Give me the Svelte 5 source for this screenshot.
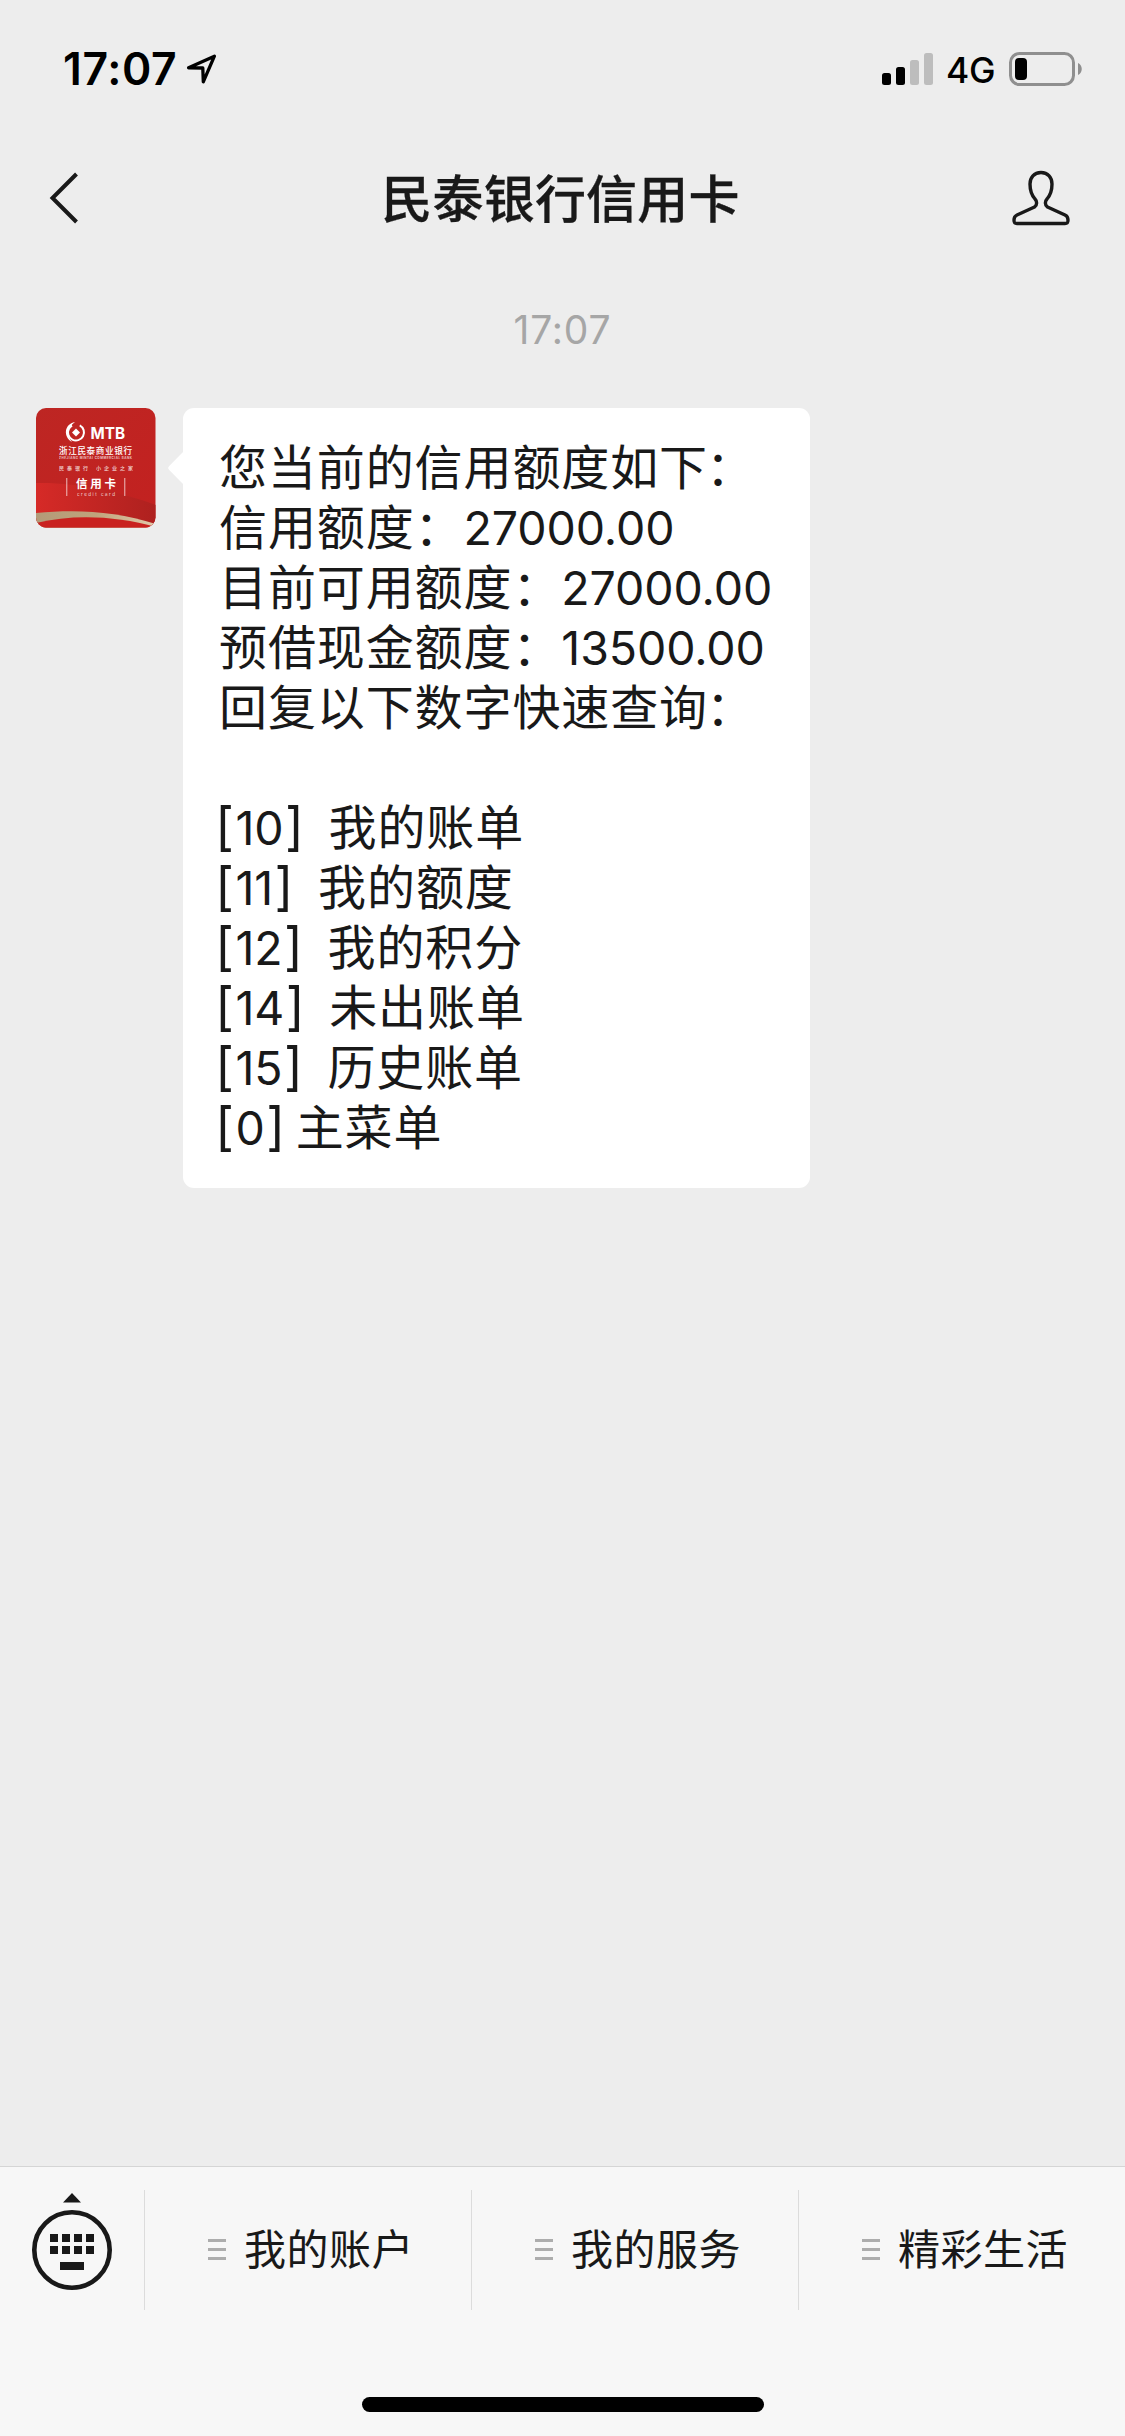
<script lang="ts">
  const title = '民泰银行信用卡';
  const time = '17:07';

  const limits = [
    { label: '信用额度：', value: '27000.00' },
    { label: '目前可用额度：', value: '27000.00' },
    { label: '预借现金额度：', value: '13500.00' },
  ];

  const replies = [
    { code: '10', text: '我的账单' },
    { code: '11', text: '我的额度' },
    { code: '12', text: '我的积分' },
    { code: '14', text: '未出账单' },
    { code: '15', text: '历史账单' },
    { code: '0', text: '主菜单', tight: true },
  ];

  const menus = ['我的账户', '我的服务', '精彩生活'];
</script>

<div class="screen">
  <div class="status-bar">
    <span class="clock">{time}</span>
    <svg class="location" width="32" height="32" viewBox="0 0 32 32">
      <path d="M2.600 14.800 L28.400 3.200 L17.300 28.800 L16.800 15 Z" fill="none" stroke="#000" stroke-width="3.300" stroke-linejoin="round" />
    </svg>
    <svg class="signal" width="52" height="34" viewBox="0 0 52 34">
      <rect x="0" y="21" width="9" height="12" rx="2.5" fill="#000" />
      <rect x="14" y="15" width="9" height="18" rx="2.5" fill="#000" />
      <rect x="28" y="8" width="9" height="25" rx="2.5" fill="#bdbdbd" />
      <rect x="42" y="1" width="9" height="32" rx="2.5" fill="#bdbdbd" />
    </svg>
    <span class="network">4G</span>
    <svg class="battery" width="74" height="34" viewBox="0 0 74 34">
      <rect x="1.5" y="1.5" width="63" height="31" rx="9" fill="none" stroke="#8f8f8f" stroke-width="3" />
      <rect x="6" y="6" width="12" height="22" rx="4" fill="#000" />
      <path d="M69 11 C74 13 74 21 69 23 Z" fill="#8f8f8f" />
    </svg>
  </div>

  <header class="nav-bar">
    <svg class="back" width="34" height="56" viewBox="0 0 34 56">
      <path d="M28.5 4 L4.5 28 L28.5 52" fill="none" stroke="#191919" stroke-width="4" />
    </svg>
    <h1>{title}</h1>
    <svg class="profile" width="60" height="58" viewBox="0 0 60 58">
      <path
        d="M30 3.5 C23 3.5 19 8.500 19 15 C19 22 20.500 26 24 30 C26 32 26.500 36 23.500 38 L6 46 C3.500 47.200 3 49 3 51 C3 53.700 3.300 54.500 6 54.500 L54 54.500 C56.700 54.500 57 53.700 57 51 C57 49 56.500 47.200 54 46 L36.500 38 C33.500 36 34 32 36 30 C39.500 26 41 22 41 15 C41 8.500 37 3.500 30 3.500 Z"
        fill="none"
        stroke="#191919"
        stroke-width="3.4"
        stroke-linejoin="round"
      />
    </svg>
  </header>

  <main class="chat">
    <div class="timestamp">{time}</div>

    <div class="message">
      <svg class="avatar" width="120" height="120" viewBox="0 0 120 120">
        <defs>
          <linearGradient id="red" x1="0" y1="0" x2="1" y2="1">
            <stop offset="0" stop-color="#bd2623" />
            <stop offset="1" stop-color="#c32120" />
          </linearGradient>
          <linearGradient id="wave" x1="0" y1="0" x2="1" y2="0">
            <stop offset="0" stop-color="#d62a27" />
            <stop offset="1" stop-color="#ae211f" />
          </linearGradient>
          <linearGradient id="gold" x1="0" y1="0" x2="1" y2="0">
            <stop offset="0" stop-color="#b39a78" />
            <stop offset="0.5" stop-color="#c0a37c" />
            <stop offset="1" stop-color="#e2c9aa" />
          </linearGradient>
          <clipPath id="tile"><rect width="119.500" height="119.500" rx="10" /></clipPath>
        </defs>
        <g clip-path="url(#tile)">
          <rect width="120" height="120" fill="url(#red)" />
          <path d="M0 75 C40 74 85 84 120 97 V120 H0 Z" fill="url(#wave)" />
          <path d="M0 105 C40 101 80 103 120 116 V120 H0 Z" fill="url(#gold)" />
          <path d="M0 115 C38 106 80 108 120 119 V120 H0 Z" fill="#c9211f" />
          <circle cx="40" cy="24.500" r="8" fill="none" stroke="#fff" stroke-width="2" stroke-dasharray="42 8.300" transform="rotate(-62 40 24.500)" />
          <path d="M39 14 C28 16 27 29 36 34 C31 28 31 20 39 14 Z" fill="#fff" />
          <path d="M40 20.500 L44 24.500 L40 28.500 L36 24.500 Z" fill="#fff" />
          <g fill="#fff">
            <text class="mark" x="54.500" y="30.500" font-size="16.500" textLength="34.500" lengthAdjust="spacingAndGlyphs">MTB</text>
            <text class="cn" x="23" y="45.500" font-size="8.600" textLength="73">浙江民泰商业银行</text>
            <text class="mark" x="23" y="51" font-size="3" opacity="0.7" textLength="73">ZHEJIANG MINTAI COMMERCIAL BANK</text>
            <text class="cn" x="23" y="62" font-size="5" opacity="0.8" textLength="29">民泰银行</text>
            <text class="cn" x="60" y="62" font-size="5" opacity="0.8" textLength="37">小企业之家</text>
            <text class="cn bold" x="40" y="79.500" font-size="11.500" textLength="40">信用卡</text>
            <text class="small" x="41" y="87.500" font-size="4.500" opacity="0.8" textLength="38">credit card</text>
            <rect x="30.500" y="70" width="0.700" height="18" />
            <rect x="88.500" y="70" width="0.700" height="18" />
          </g>
        </g>
      </svg>

      <div class="bubble">
        <p>您当前的信用额度如下<span class="colon">：</span></p>
        {#each limits as limit}
          <p>{limit.label}<span class="num">{limit.value}</span></p>
        {/each}
        <p>回复以下数字快速查询<span class="colon">：</span></p>
        <p class="blank"></p>
        {#each replies as reply}
          <p class="reply" class:tight={reply.tight}>
            <span class="num"><span class="bracket">[</span>{reply.code}<span class="bracket">]</span></span>
            <span>{reply.text}</span>
          </p>
        {/each}
      </div>
    </div>
  </main>

  <footer class="menu-bar">
    <div class="menu-row">
      <div class="keyboard">
        <svg width="84" height="100" viewBox="0 0 84 100">
          <path d="M42 1 L51 10.500 H33 Z" fill="#191919" />
          <circle cx="42" cy="58" r="37.700" fill="none" stroke="#191919" stroke-width="4.600" />
          {#each [20, 32, 44, 56] as x}
            <rect {x} y="42" width="8" height="8" fill="#191919" />
            <rect {x} y="54" width="8" height="8" fill="#191919" />
          {/each}
          <rect x="30" y="70" width="24" height="8" fill="#191919" />
        </svg>
      </div>
      {#each menus as menu}
        <div class="menu-item">
          <span class="lines"><i></i><i></i><i></i></span>
          <span>{menu}</span>
        </div>
      {/each}
    </div>
    <div class="home-indicator"></div>
  </footer>
</div>

<style>
  :global(body) {
    margin: 0;
    background: #ededed;
  }

  .screen {
    display: flex;
    flex-direction: column;
    width: 1125px;
    height: 2436px;
    overflow: hidden;
    background: #ededed;
    color: #191919;
    font-family: Inter, 'Noto Sans CJK SC', sans-serif;
  }

  .status-bar {
    display: flex;
    align-items: center;
    box-sizing: border-box;
    height: 138px;
    padding: 0 42px 0 63px;
    color: #000;
  }

  .clock {
    width: 123px;
    font-size: 44.5px;
    font-weight: 600;
    line-height: 50px;
    letter-spacing: 0.6px;
    white-space: nowrap;
  }

  .location {
    margin-right: auto;
  }

  .network {
    width: 48px;
    margin: 3px 15px 0 11px;
    font-size: 35.5px;
    font-weight: 500;
    line-height: 40px;
    letter-spacing: -0.2px;
    white-space: nowrap;
  }

  .signal {
    margin-right: 1px;
  }

  .nav-bar {
    display: flex;
    align-items: center;
    justify-content: space-between;
    height: 120px;
    padding: 0 54px 0 48px;
  }

  .back {
    margin-right: 26px;
  }

  h1 {
    margin: 4px 0 0 2px;
    font-size: 51px;
    font-weight: 500;
    line-height: 60px;
    letter-spacing: 0.2px;
    -webkit-text-stroke: 0.3px #191919;
  }

  .chat {
    flex: 1;
  }

  .timestamp {
    margin-top: 47px;
    height: 103px;
    color: #a6a6a6;
    font-size: 39px;
    line-height: 50px;
    letter-spacing: 0.8px;
    text-align: center;
  }

  .message {
    display: flex;
    align-items: flex-start;
    padding-left: 36px;
  }

  .bubble {
    position: relative;
    box-sizing: border-box;
    width: 627px;
    height: 780px;
    margin-left: 27px;
    padding: 30px 0 0 36px;
    border-radius: 11px;
    background: #fff;
    font-size: 48px;
    line-height: 60px;
    letter-spacing: 0.9px;
    white-space: nowrap;
  }

  .bubble::before {
    content: '';
    position: absolute;
    top: 43px;
    left: -15px;
    width: 16px;
    height: 34px;
    background: #fff;
    clip-path: polygon(100% 0, 8% 44%, 0 50%, 8% 56%, 100% 100%);
  }

  .bubble p {
    height: 60px;
    margin: 0;
  }

  .colon {
    margin-left: -2px;
  }

  .num {
    font-size: 46.5px;
    letter-spacing: -0.1px;
  }

  .bracket {
    font-size: 52px;
    line-height: 1;
    letter-spacing: 1.5px;
  }

  .bracket:first-child {
    margin-left: -4px;
  }

  .bracket:last-child {
    margin-left: 1.5px;
  }

  .reply {
    display: flex;
    gap: 23px;
  }

  .reply.tight {
    gap: 9px;
  }

  .menu-bar {
    display: flex;
    flex-direction: column;
    align-items: center;
    justify-content: space-between;
    box-sizing: border-box;
    height: 270px;
    padding: 23px 0 24px;
    border-top: 1px solid #d5d5d5;
    background: #f7f7f7;
  }

  .menu-row {
    display: flex;
    width: 100%;
    height: 120px;
  }

  .keyboard {
    box-sizing: border-box;
    width: 144px;
    height: 120px;
    padding: 2px 0 0 30px;
  }

  .menu-item {
    display: flex;
    align-items: center;
    box-sizing: border-box;
    width: 327px;
    height: 120px;
    padding-left: 63px;
    border-left: 1px solid #dcdcdc;
    font-size: 42px;
    line-height: 60px;
    letter-spacing: 0.5px;
  }

  .lines {
    display: flex;
    flex-direction: column;
    gap: 6px;
    margin: 0 18px 2px 0;
  }

  .lines i {
    width: 18px;
    height: 3px;
    background: #adadad;
  }

  .home-indicator {
    width: 402px;
    height: 15px;
    border-radius: 8px;
    background: #000;
  }

  .mark {
    font-family: Inter, sans-serif;
    font-weight: 700;
  }

  .cn {
    font-family: 'Noto Sans CJK SC', sans-serif;
    font-weight: 500;
  }

  .bold {
    font-weight: 700;
  }

  .small {
    font-family: Inter, sans-serif;
  }
</style>
